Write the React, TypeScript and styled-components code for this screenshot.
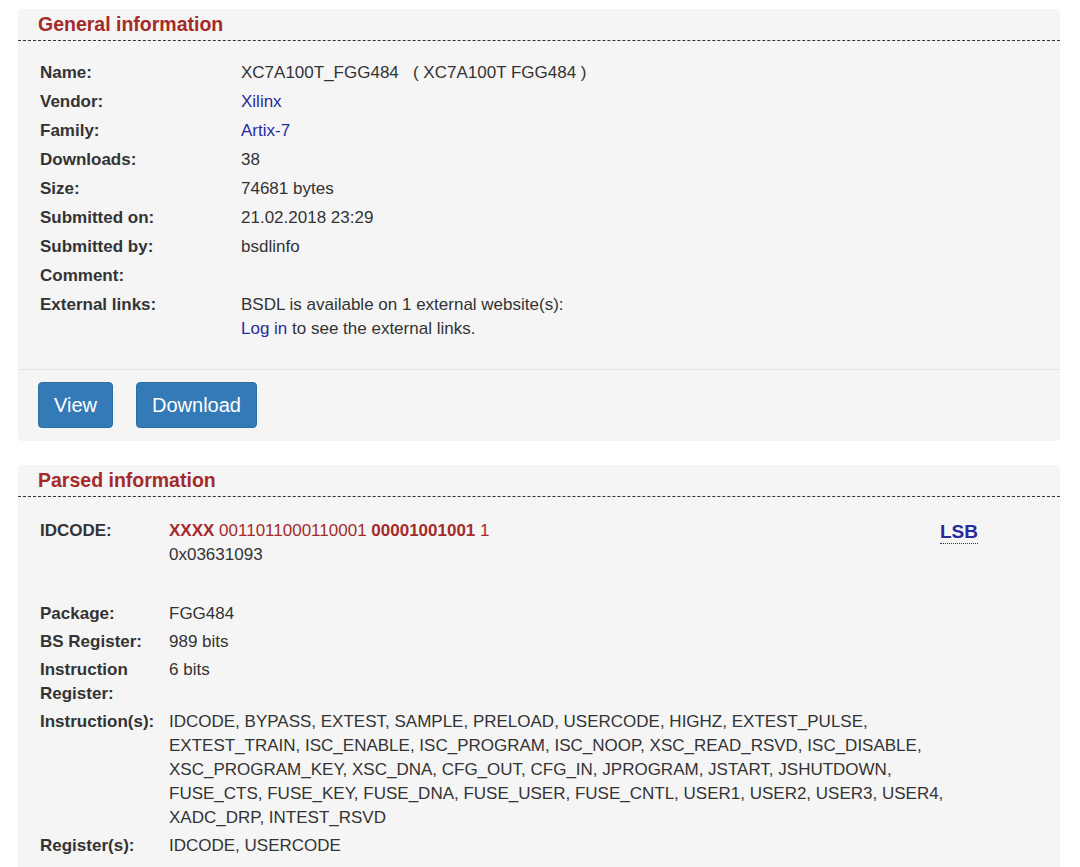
import React from "react";
import styled, { createGlobalStyle } from "styled-components";

const Global = createGlobalStyle`
  body { margin: 0; background: #fff; font-family: "Liberation Sans", Arial, sans-serif; color: #333; }
`;
const Page = styled.div`
  padding: 9px 20px 0 18px; display: flex; flex-direction: column; gap: 24px;
`;
const Panel = styled.div`
  background: #f5f5f5; border-radius: 4px;
`;
const Head = styled.div`
  padding: 4px 0 5px 20px; border-bottom: 1px dashed #333;
  color: #a52a2a; font-weight: bold; font-size: 19.5px; line-height: 22px;
`;
const Table = styled.div<{ $col: number; $gen?: boolean }>`
  display: grid; grid-template-columns: ${p => p.$col}px 1fr auto;
  padding: ${p => p.$gen ? "20px 22px 28px 22px" : "22px 82px 20px 22px"};
  font-size: 17px; line-height: 24px; row-gap: ${p => p.$gen ? 5 : 4}px;
`;
const Label = styled.div` font-weight: bold; color: #333; `;
const Value = styled.div<{ $span?: boolean }>` grid-column: ${p => p.$span ? "2 / 4" : "auto"}; color: #333; `;
const Link = styled.a` color: #2a2a9f; text-decoration: none; `;
const Footer = styled.div`
  border-top: 1px solid #e3e3e3; padding: 12px 20px 13px; display: flex; gap: 23px;
`;
const Btn = styled.button`
  background: #337ab7; color: #fff; border: 1px solid #2e6da4; border-radius: 4px;
  font: 20px "Liberation Sans", Arial, sans-serif; height: 46px; padding: 0 15px;
`;
const Red = styled.span<{ $b?: boolean }>` color: #a52a2a; font-weight: ${p => p.$b ? "bold" : "normal"}; `;
const Lsb = styled.a`
  color: #2a2a9f; font-weight: bold; font-size: 19px; border-bottom: 1px dotted #2a2a9f;
  align-self: start; margin-top: 2px; line-height: 22px; text-decoration: none;
`;

const gen: [string, React.ReactNode][] = [
  ["Name:", <>XC7A100T_FGG484 &nbsp;&nbsp;( XC7A100T FGG484 )</>],
  ["Vendor:", <Link>Xilinx</Link>],
  ["Family:", <Link>Artix-7</Link>],
  ["Downloads:", "38"],
  ["Size:", "74681 bytes"],
  ["Submitted on:", "21.02.2018 23:29"],
  ["Submitted by:", "bsdlinfo"],
  ["Comment:", ""],
  ["External links:", <>BSDL is available on 1 external website(s):<br /><Link>Log in</Link> to see the external links.</>],
];

export default function App() {
  return (
    <>
      <Global />
      <Page>
        <Panel>
          <Head>General information</Head>
          <Table $col={201} $gen>
            {gen.map(([l, v]) => (
              <React.Fragment key={l}>
                <Label>{l}</Label>
                <Value $span>{v}</Value>
              </React.Fragment>
            ))}
          </Table>
          <Footer>
            <Btn>View</Btn>
            <Btn>Download</Btn>
          </Footer>
        </Panel>
        <Panel>
          <Head>Parsed information</Head>
          <Table $col={129}>
            <Label>IDCODE:</Label>
            <Value style={{ paddingBottom: 31 }}>
              <Red $b>XXXX</Red> <Red>0011011000110001</Red> <Red $b>00001001001</Red> <Red>1</Red><br />0x03631093
            </Value>
            <Lsb>LSB</Lsb>
            <Label>Package:</Label><Value $span>FGG484</Value>
            <Label>BS Register:</Label><Value $span>989 bits</Value>
            <Label>Instruction Register:</Label><Value $span>6 bits</Value>
            <Label>Instruction(s):</Label>
            <Value $span>IDCODE, BYPASS, EXTEST, SAMPLE, PRELOAD, USERCODE, HIGHZ, EXTEST_PULSE, EXTEST_TRAIN, ISC_ENABLE, ISC_PROGRAM, ISC_NOOP, XSC_READ_RSVD, ISC_DISABLE, XSC_PROGRAM_KEY, XSC_DNA, CFG_OUT, CFG_IN, JPROGRAM, JSTART, JSHUTDOWN, FUSE_CTS, FUSE_KEY, FUSE_DNA, FUSE_USER, FUSE_CNTL, USER1, USER2, USER3, USER4, XADC_DRP, INTEST_RSVD</Value>
            <Label>Register(s):</Label><Value $span>IDCODE, USERCODE</Value>
          </Table>
        </Panel>
      </Page>
    </>
  );
}
